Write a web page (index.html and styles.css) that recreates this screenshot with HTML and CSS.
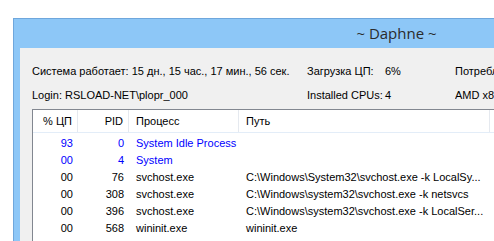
FILE: index.html
```html
<!DOCTYPE html>
<html lang="ru">
<head>
    <meta charset="UTF-8">
    <title>~ Daphne ~</title>
    <link rel="stylesheet" href="styles.css">
</head>
<body>
    <div class="window">
        <div class="titlebar">~ Daphne ~</div>
        <div class="client">
            <div class="info">
                <span class="uptime">Система работает: 15 дн., 15 час., 17 мин., 56 сек.</span>
                <span class="label">Загрузка ЦП:</span>
                <span class="value">6%</span>
                <span class="clip">Потребление памяти</span>

                <span>Login: RSLOAD-NET\plopr_000</span>
                <span class="label">Installed CPUs:</span>
                <span class="value">4</span>
                <span class="clip">AMD x86 Family</span>
            </div>

            <div class="list">
                <div class="row head">
                    <div class="cell num">% ЦП</div>
                    <div class="cell num">PID</div>
                    <div class="cell">Процесс</div>
                    <div class="cell">Путь</div>
                    <div class="cell"></div>
                </div>
                <div class="row system">
                    <div class="cell num">93</div>
                    <div class="cell num">0</div>
                    <div class="cell">System Idle Process</div>
                    <div class="cell"></div>
                </div>
                <div class="row system">
                    <div class="cell num">00</div>
                    <div class="cell num">4</div>
                    <div class="cell">System</div>
                    <div class="cell"></div>
                </div>
                <div class="row">
                    <div class="cell num">00</div>
                    <div class="cell num">76</div>
                    <div class="cell">svchost.exe</div>
                    <div class="cell">C:\Windows\System32\svchost.exe -k LocalSy...</div>
                </div>
                <div class="row">
                    <div class="cell num">00</div>
                    <div class="cell num">308</div>
                    <div class="cell">svchost.exe</div>
                    <div class="cell">C:\Windows\system32\svchost.exe -k netsvcs</div>
                </div>
                <div class="row">
                    <div class="cell num">00</div>
                    <div class="cell num">396</div>
                    <div class="cell">svchost.exe</div>
                    <div class="cell">C:\Windows\system32\svchost.exe -k LocalSer...</div>
                </div>
                <div class="row">
                    <div class="cell num">00</div>
                    <div class="cell num">568</div>
                    <div class="cell">wininit.exe</div>
                    <div class="cell">wininit.exe</div>
                </div>
            </div>
        </div>
    </div>
</body>
</html>
```

FILE: styles.css
```css
:root {
    --frame: #8dc7f7;
    --frame-border: #6fa7dc;
    --face: #f0f0f0;
    --list-border: #828790;
    --head-line: #e3edf8;
    --sep: #e5e9ef;
    --blue: #0000ff;
}

* {
    box-sizing: border-box;
    margin: 0;
    padding: 0;
}

html, body {
    height: 241px;
    overflow: hidden;
}

body {
    background: #ffffff;
    font-family: 'Liberation Sans', Arial, sans-serif;
    font-size: 11px;
    color: #000000;
    padding: 18px 0 0 13px;
}

/* window is wider than the viewport, only its left part is visible */
.window {
    width: 766px;
    height: 223px;
    background: var(--frame);
    border: 1px solid var(--frame-border);
    border-right: none;
    border-bottom: none;
    padding-left: 6px;
    display: flex;
    flex-direction: column;
}

.titlebar {
    height: 29px;
    line-height: 28px;
    text-align: center;
    font-family: 'Open Sans', 'Liberation Sans', sans-serif;
    font-size: 15px;
    color: #2b2b2b;
    padding-right: 6px;
}

.client {
    flex: 1;
    min-height: 0;
    background: var(--face);
    padding: 11px 0 0 12px;
    display: flex;
    flex-direction: column;
}

.info {
    display: grid;
    grid-template-columns: 275px 78px 70px 44px;
    grid-auto-rows: 24px;
    align-items: center;
    white-space: nowrap;
}

.clip {
    overflow: hidden;
}

.list {
    flex: 1;
    margin-top: 2px;
    background: #ffffff;
    border: 1px solid var(--list-border);
    border-bottom: none;
    overflow: hidden;
}

.row {
    display: grid;
    grid-template-columns: 45px 51px 110px 251px 1fr;
    height: 17px;
    line-height: 17px;
    white-space: nowrap;
}

.row.head {
    height: 23px;
    line-height: 23px;
    border-bottom: 1px solid var(--head-line);
    margin-bottom: 2px;
}

.row.head .cell {
    border-right: 1px solid var(--sep);
}

.row.head .cell:last-child {
    border-right: none;
}

.cell {
    padding-left: 7px;
    overflow: hidden;
}

.cell.num {
    text-align: right;
    padding-left: 0;
    padding-right: 5px;
}

.system {
    color: var(--blue);
}
```
